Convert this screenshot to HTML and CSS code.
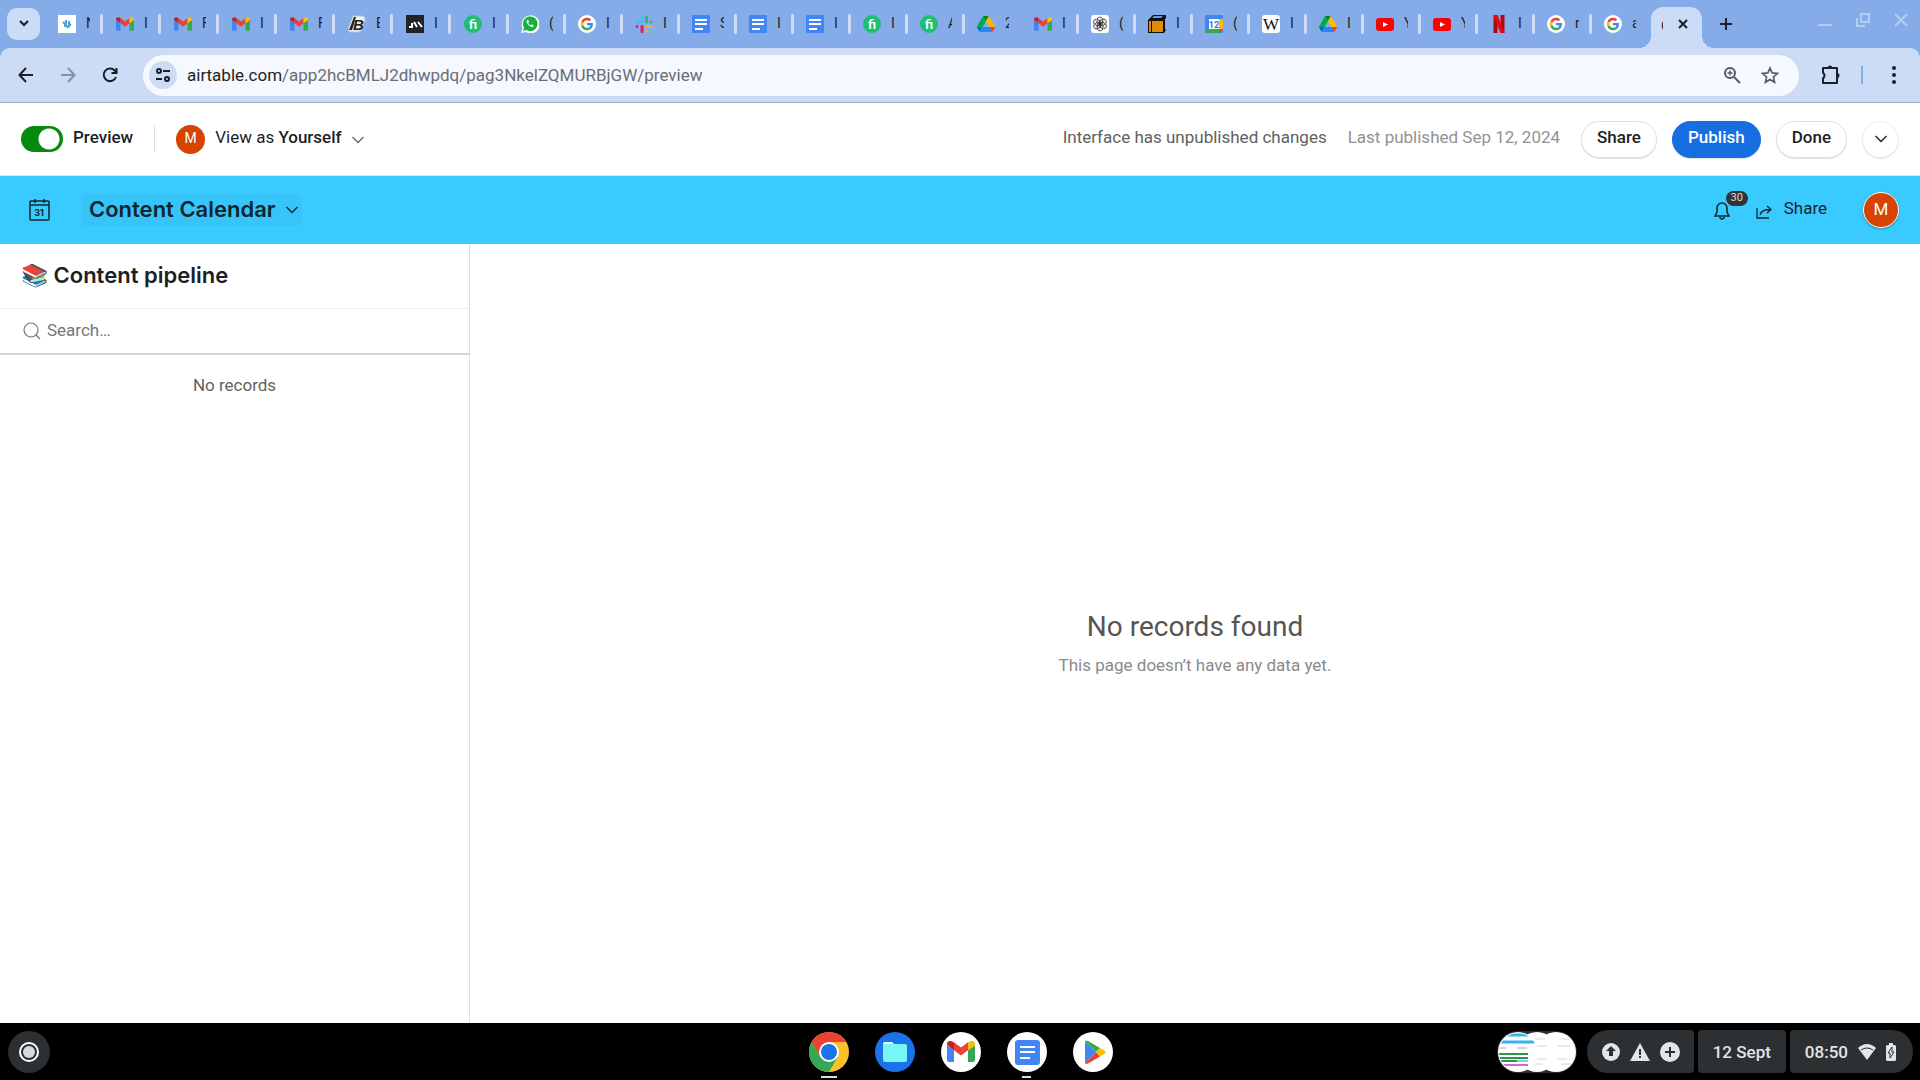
FILE: index.html
```html
<!DOCTYPE html>
<html lang="en">
<head>
  <meta charset="UTF-8">
  <title>Content Calendar</title>
  <link rel="stylesheet" href="styles.css">
</head>
<body>
  <!-- shared icons -->
  <svg class="sprite" width="0" height="0" aria-hidden="true">
    <symbol id="gmail" viewBox="0 0 24 18">
      <path fill="#4285f4" d="M2 18h4V8L0 3.600V16a2 2 0 0 0 2 2z"/>
      <path fill="#34a853" d="M18 18h4a2 2 0 0 0 2-2V3.600L18 8z"/>
      <path fill="#ea4335" d="M6 1l6 4.500L18 1v7l-6 4.500L6 8z"/>
      <path fill="#fbbc04" d="M18 8l6-4.500v-1C24 .4 21.500-.9 19.600.4L18 1.300z"/>
      <path fill="#c5221f" d="M6 8L0 3.500v-1C0 .4 2.500-.9 4.400.4L6 1.300z"/>
    </symbol>
    <symbol id="google" viewBox="0 0 72 72">
      <circle cx="36" cy="36" r="36" fill="#fff"/>
      <g transform="translate(11 11) scale(1.04)">
        <path fill="#ea4335" d="M24 9.5c3.54 0 6.71 1.22 9.21 3.6l6.85-6.85C35.9 2.38 30.47 0 24 0 14.62 0 6.51 5.38 2.56 13.22l7.98 6.19C12.43 13.72 17.74 9.5 24 9.5z"/>
        <path fill="#4285f4" d="M46.98 24.55c0-1.57-.15-3.09-.38-4.55H24v9.02h12.94c-.58 2.96-2.26 5.48-4.78 7.18l7.73 6c4.51-4.18 7.09-10.36 7.09-17.65z"/>
        <path fill="#fbbc05" d="M10.53 28.59c-.48-1.45-.76-2.99-.76-4.59s.27-3.14.76-4.59l-7.98-6.19C.92 16.46 0 20.12 0 24c0 3.88.92 7.54 2.56 10.78l7.97-6.19z"/>
        <path fill="#34a853" d="M24 48c6.48 0 11.93-2.13 15.89-5.81l-7.73-6c-2.15 1.45-4.92 2.3-8.16 2.3-6.26 0-11.57-4.22-13.47-9.91l-7.98 6.19C6.51 42.62 14.62 48 24 48z"/>
      </g>
    </symbol>
    <symbol id="drive" viewBox="0 0 87.3 78">
      <path fill="#0066da" d="m6.6 66.85 3.85 6.65c.8 1.4 1.95 2.5 3.3 3.3l13.75-23.8h-27.5c0 1.55.4 3.1 1.2 4.5z"/>
      <path fill="#00ac47" d="m43.65 25-13.75-23.8c-1.35.8-2.5 1.9-3.3 3.3l-25.4 44a9.06 9.06 0 0 0-1.2 4.5h27.5z"/>
      <path fill="#ea4335" d="m73.55 76.8c1.35-.8 2.5-1.9 3.3-3.3l1.6-2.75 7.65-13.25c.8-1.4 1.2-2.95 1.2-4.5h-27.5l5.85 11.5z"/>
      <path fill="#00832d" d="m43.65 25 13.75-23.8c-1.35-.8-2.9-1.2-4.5-1.2h-18.5c-1.6 0-3.15.45-4.5 1.2z"/>
      <path fill="#2684fc" d="m59.8 53h-32.3l-13.75 23.8c1.35.8 2.9 1.2 4.5 1.2h50.8c1.6 0 3.15-.45 4.5-1.2z"/>
      <path fill="#ffba00" d="m73.4 26.5-12.7-22c-.8-1.4-1.95-2.5-3.3-3.3l-13.75 23.8 16.15 28h27.45c0-1.55-.4-3.1-1.2-4.5z"/>
    </symbol>
    <symbol id="docs" viewBox="0 0 18 18">
      <rect width="18" height="18" rx="1" fill="#4285f4"/>
      <path d="M3 5h12M3 9h12M3 14h8" stroke="#fff" stroke-width="2"/>
    </symbol>
    <symbol id="fiverr" viewBox="0 0 18 18">
      <circle cx="9" cy="9" r="9" fill="#1dbf73"/>
      <text x="9" y="14" text-anchor="middle" font-family="Lato" font-weight="700" font-size="14" fill="#fff">fi</text>
    </symbol>
    <symbol id="youtube" viewBox="0 0 18 18">
      <rect y="3" width="18" height="13" rx="3" fill="#f00"/>
      <path d="M7 7l5 2.500-5 2.500z" fill="#fff"/>
    </symbol>
    <symbol id="chevron" viewBox="0 0 12 8">
      <path d="M.5 1l5.500 5.500L11.500 1" fill="none" stroke="currentColor" stroke-width="1.300"/>
    </symbol>
  </svg>

  <!-- tab strip -->
  <nav class="tabstrip">
    <button class="tab-search" aria-label="Search tabs">
      <svg width="12" height="8" viewBox="0 0 12 8"><path d="M2 1l4 4 4-4" fill="none" stroke="#1b2028" stroke-width="2"/></svg>
    </button>
    <div class="tabs">
      <a class="tab wide" href="#"><svg viewBox="0 0 18 18"><rect width="18" height="18" fill="#fff"/><path d="M5 7l2 2v3M8 5v5l2 3M11 6v5l2-2M6 10l3 1" fill="none" stroke="#4aa7c9" stroke-width="2"/></svg><span>N</span></a>
      <a class="tab wide" href="#"><svg><use href="#gmail"/></svg><span>I</span></a>
      <a class="tab wide" href="#"><svg><use href="#gmail"/></svg><span>F</span></a>
      <a class="tab wide" href="#"><svg><use href="#gmail"/></svg><span>I</span></a>
      <a class="tab wide" href="#"><svg><use href="#gmail"/></svg><span>F</span></a>
      <a class="tab wide" href="#"><svg viewBox="0 0 18 18"><path d="M5 1h10q3 1 2 5l-2 3q1 6-4 8H1L0 14z" fill="#eceef2" stroke="#b9c0cc"/><path d="M6 2L1 15h3L8 2z" fill="#222"/><text x="5" y="15" font-family="Liberation Sans" font-weight="700" font-style="italic" font-size="15" fill="#222">B</text></svg><span>E</span></a>
      <a class="tab wide" href="#"><svg viewBox="0 0 18 18"><rect width="18" height="18" fill="#222326"/><path d="M3 12h3V8M8 7l3 5M12 7l4 5" fill="none" stroke="#fff" stroke-width="2"/></svg><span>I</span></a>
      <a class="tab" href="#"><svg><use href="#fiverr"/></svg><span>I</span></a>
      <a class="tab" href="#"><svg viewBox="0 0 18 18"><path d="M0 18l1.500-5A9 9 0 1 1 5 17z" fill="#fff"/><path d="M2 16l1-3.500a7.300 7.300 0 1 1 2.500 2.500z" fill="#12b33a"/><path d="M6 5c-1 1-.5 3 1.500 5s4 2.700 5 1.500v-1.300l-2-.9-1 1c-1-.4-2-1.400-2.300-2.400l.8-.8L7.300 5z" fill="#fff"/></svg><span>(</span></a>
      <a class="tab" href="#"><svg><use href="#google"/></svg><span>I</span></a>
      <a class="tab" href="#"><svg viewBox="0 0 18 18" fill="none" stroke-width="3" stroke-linecap="round"><path d="M2 7h5M7 2v0" stroke="#36c5f0"/><path d="M11.500 2v5M16 7v0" stroke="#2eb67d"/><path d="M11.500 11.500h5M11.500 16v0" stroke="#ecb22e"/><path d="M7 11.500v5M2 11.500v0" stroke="#e01e5a"/></svg><span>I</span></a>
      <a class="tab" href="#"><svg><use href="#docs"/></svg><span>S</span></a>
      <a class="tab" href="#"><svg><use href="#docs"/></svg><span>I</span></a>
      <a class="tab" href="#"><svg><use href="#docs"/></svg><span>I</span></a>
      <a class="tab" href="#"><svg><use href="#fiverr"/></svg><span>I</span></a>
      <a class="tab" href="#"><svg><use href="#fiverr"/></svg><span>A</span></a>
      <a class="tab no-line" href="#"><svg><use href="#drive"/></svg><span>2</span></a>
      <a class="tab" href="#"><svg><use href="#gmail"/></svg><span>I</span></a>
      <a class="tab" href="#"><svg viewBox="0 0 18 18"><rect width="18" height="18" rx="3" fill="#fff"/><g fill="none" stroke="#222" stroke-width=".8"><path id="petal" d="M6 8V5a3 3 0 0 1 5.500-1.500M6 8l5 3 3.200-1.800"/><use href="#petal" transform="rotate(60 9 9)"/><use href="#petal" transform="rotate(120 9 9)"/><use href="#petal" transform="rotate(180 9 9)"/><use href="#petal" transform="rotate(240 9 9)"/><use href="#petal" transform="rotate(300 9 9)"/></g></svg><span>(</span></a>
      <a class="tab" href="#"><svg viewBox="0 0 18 18"><path d="M0 5l5-5h13v3l-1 1v10l1 1-2 3H0z" fill="#111"/><path d="M4 3l2-2h9l-2 2z" fill="#6d9bc8"/><path d="M1 6h2v11H1zM4 6h11v11H4z" fill="#e08b08"/></svg><span>I</span></a>
      <a class="tab" href="#"><svg viewBox="0 0 18 18"><rect width="18" height="18" rx="1" fill="#4285f4"/><path d="M14 4h4v10h-4z" fill="#fbbc04"/><path d="M0 14h14v4H1a1 1 0 0 1-1-1z" fill="#34a853"/><path d="M14 14h4l-4 4z" fill="#ea4335"/><path d="M4 4h10v10H4z" fill="#fff"/><text x="9" y="13" text-anchor="middle" font-family="Roboto" font-weight="700" font-size="9" fill="#3f72cf">12</text></svg><span>(</span></a>
      <a class="tab" href="#"><svg viewBox="0 0 18 18"><rect width="18" height="18" rx="3" fill="#fff"/><text x="9" y="15" text-anchor="middle" font-family="Liberation Serif" font-size="17" fill="#111">W</text></svg><span>I</span></a>
      <a class="tab" href="#"><svg><use href="#drive"/></svg><span>I</span></a>
      <a class="tab" href="#"><svg><use href="#youtube"/></svg><span>Y</span></a>
      <a class="tab" href="#"><svg><use href="#youtube"/></svg><span>Y</span></a>
      <a class="tab" href="#"><svg viewBox="0 0 18 18"><path d="M5.500 0v18M12.500 0v18" stroke="#b1060f" stroke-width="4"/><path d="M5.500 0l7 18" stroke="#e50914" stroke-width="4"/></svg><span>I</span></a>
      <a class="tab" href="#"><svg><use href="#google"/></svg><span>r</span></a>
      <a class="tab no-line" href="#"><svg><use href="#google"/></svg><span>a</span></a>
    </div>
    <div class="tab-active">
      <span>C</span>
      <button aria-label="Close tab"><svg width="10" height="10" viewBox="0 0 10 10"><path d="M1 1l8 8M9 1L1 9" stroke="#1b2028" stroke-width="2"/></svg></button>
    </div>
    <button class="new-tab" aria-label="New tab"><svg width="12" height="12" viewBox="0 0 12 12"><path d="M6 0v12M0 6h12" stroke="#1b2028" stroke-width="2"/></svg></button>
    <div class="window-buttons">
      <button aria-label="Minimise"><svg width="14" height="14" viewBox="0 0 14 14"><path d="M0 12h14" stroke="#b4cdf5" stroke-width="2"/></svg></button>
      <button aria-label="Restore"><svg width="14" height="14" viewBox="0 0 14 14" fill="none" stroke="#b4cdf5" stroke-width="2"><path d="M5 1h8v8H5zM1 5v8h8"/></svg></button>
      <button aria-label="Close"><svg width="14" height="14" viewBox="0 0 14 14"><path d="M1 1l12 12M13 1L1 13" stroke="#b4cdf5" stroke-width="2"/></svg></button>
    </div>
  </nav>

  <!-- address bar -->
  <div class="toolbar">
    <button aria-label="Back"><svg width="16" height="16" viewBox="0 0 16 16" fill="none" stroke="#1b2028" stroke-width="2"><path d="M15 8H2M8 1L1.500 8 8 15"/></svg></button>
    <button aria-label="Forward"><svg width="16" height="16" viewBox="0 0 16 16" fill="none" stroke="#8791a8" stroke-width="2"><path d="M1 8h13M8 1l6.500 7L8 15"/></svg></button>
    <button aria-label="Reload"><svg width="16" height="16" viewBox="0 0 16 16" fill="none" stroke="#1b2028" stroke-width="2"><path d="M14 10a6.300 6.300 0 1 1-1.300-6.500L14 5M14.500 1v5H9.500"/></svg></button>
    <div class="omnibox">
      <button class="site-info" aria-label="Site information"><svg width="16" height="16" viewBox="0 0 16 16" fill="none" stroke="#1b2028" stroke-width="2"><circle cx="4" cy="4" r="2"/><path d="M8 4h7M1 12h6"/><circle cx="12" cy="12" r="2"/></svg></button>
      <a class="url" href="#">airtable.com<span>/app2hcBMLJ2dhwpdq/pag3NkelZQMURBjGW/preview</span></a>
      <button aria-label="Zoom"><svg width="18" height="18" viewBox="0 0 18 18" fill="none" stroke="#555a61" stroke-width="2"><circle cx="7" cy="7" r="5"/><path d="M11 11l6 6"/><path d="M4.500 7h5M7 4.500v5" stroke-width="1.500"/></svg></button>
      <button aria-label="Bookmark"><svg width="18" height="18" viewBox="0 0 18 18" fill="none" stroke="#555a61" stroke-width="1.600"><path d="M9 2l2.100 4.900 5.400.5-4.100 3.600 1.200 5.300L9 13.500l-4.600 2.800L5.600 11 1.500 7.400l5.400-.5z"/></svg></button>
    </div>
    <button aria-label="Extensions"><svg width="20" height="20" viewBox="0 0 20 20"><path d="M2 3h14v15H2v-4.500q3-3 0-6z" fill="none" stroke="#1b2028" stroke-width="2" stroke-linejoin="round"/><path d="M6.500 3a2.500 2.500 0 0 1 5 0zM16 8a2.500 2.500 0 0 1 0 5z" fill="#1b2028"/></svg></button>
    <span class="toolbar-line"></span>
    <button aria-label="Menu"><svg width="4" height="18" viewBox="0 0 4 18" fill="#1b2028"><circle cx="2" cy="2" r="2"/><circle cx="2" cy="9" r="2"/><circle cx="2" cy="16" r="2"/></svg></button>
  </div>

  <!-- preview bar -->
  <header class="preview-bar">
    <label class="toggle"><input type="checkbox" checked><span class="lift">Preview</span></label>
    <span class="divider"></span>
    <button class="view-as">
      <span class="avatar">M</span>
      <span class="lift">View as <b>Yourself</b></span>
      <svg class="chevron"><use href="#chevron"/></svg>
    </button>
    <span class="status lift">Interface has unpublished changes</span>
    <span class="published lift">Last published Sep 12, 2024</span>
    <div class="actions">
      <button class="pill">Share</button>
      <button class="pill primary">Publish</button>
      <button class="pill">Done</button>
      <button class="more" aria-label="More"><svg class="chevron"><use href="#chevron"/></svg></button>
    </div>
  </header>

  <!-- app header -->
  <header class="app-bar">
    <svg class="calendar" width="22" height="22" viewBox="0 0 22 22" fill="none" stroke="#12262e" stroke-width="1.500"><rect x="2" y="2" width="19" height="19" rx="1"/><path d="M2 6h19M7 0v4M16 0v4"/><text x="11" y="17" text-anchor="middle" font-family="Inter" font-weight="700" font-size="9" fill="#12262e" stroke="none">31</text></svg>
    <button class="app-title">Content Calendar <svg class="chevron"><use href="#chevron"/></svg></button>
    <button class="bell" aria-label="Notifications">
      <svg width="18" height="20" viewBox="0 0 18 20" fill="none" stroke="#12262e" stroke-width="1.500"><path d="M2 15l2-4V7a5 5 0 0 1 10 0v4l2 4zM7 16a2 2 0 0 0 4 0"/></svg>
      <span class="badge">30</span>
    </button>
    <button class="share">
      <svg width="16" height="14" viewBox="0 0 16 14" fill="none" stroke="#12262e" stroke-width="1.300"><path d="M1 3v10h12M4 10c1-4 4-5.500 10-5.500M11 1l4 3.500L11 8"/></svg>
      <span class="lift">Share</span>
    </button>
    <span class="avatar ringed">M</span>
  </header>

  <main class="content">
    <aside class="sidebar">
      <h1><span class="books">📚</span> Content pipeline</h1>
      <label class="search">
        <svg width="18" height="18" viewBox="0 0 18 18" fill="none" stroke="#777" stroke-width="1.200"><circle cx="8" cy="8" r="7"/><path d="M13 13l4 4"/></svg>
        <input type="text" placeholder="Search…" aria-label="Search">
      </label>
      <p>No records</p>
    </aside>
    <section class="empty">
      <h2>No records found</h2>
      <p>This page doesn’t have any data yet.</p>
    </section>
  </main>

  <!-- shelf -->
  <footer class="shelf">
    <button class="launcher" aria-label="Launcher"><span></span></button>
    <div class="apps">
      <button class="app running" aria-label="Chrome"><svg viewBox="0 0 40 40"><circle cx="20" cy="20" r="20" fill="#fbc02d"/><path d="M2.700 10A20 20 0 0 1 37.300 10H20L11.300 25z" fill="#ea4335"/><path d="M2.700 10A20 20 0 0 0 20 40l8.700-15L11.300 25z" fill="#34a853"/><circle cx="20" cy="20" r="10" fill="#fff"/><circle cx="20" cy="20" r="8" fill="#1a73e8"/></svg></button>
      <button class="app" aria-label="Files"><svg viewBox="0 0 40 40"><circle cx="20" cy="20" r="20" fill="#1a73e8"/><path d="M8 12q0-2 2-2h7l3 3H8z" fill="#fff"/><path d="M8 12h22q2 0 2 2v14q0 2-2 2H10q-2 0-2-2z" fill="#78f5f5"/></svg></button>
      <button class="app" aria-label="Gmail"><svg viewBox="0 0 40 40"><circle cx="20" cy="20" r="20" fill="#fff"/><use href="#gmail" x="6" y="9" width="28" height="21"/></svg></button>
      <button class="app running small" aria-label="Docs"><svg viewBox="0 0 40 40"><circle cx="20" cy="20" r="20" fill="#fff"/><rect x="8" y="8" width="25" height="25" rx="3" fill="#4285f4"/><path d="M13 15h15M13 20h15M13 26h10" stroke="#fff" stroke-width="2"/></svg></button>
      <button class="app" aria-label="Play Store"><svg viewBox="0 0 40 40"><circle cx="20" cy="20" r="20" fill="#fff"/><path d="M12 9v22l11-11z" fill="#4285f4"/><path d="M12 9q1-1 3 0l12 7-4 4z" fill="#34a853"/><path d="M12 31q1 1.500 3 .5l12-7-4-4.500z" fill="#ea4335"/><path d="M27 16l5 3q1.500 1 0 2.500l-5 3-4-4.500z" fill="#fbbc04"/></svg></button>
    </div>
    <div class="tray">
      <button class="holding" aria-label="Recent captures">
        <svg width="80" height="42" viewBox="0 0 80 42">
          <clipPath id="shot"><circle cx="21" cy="21" r="19"/></clipPath>
          <rect width="80" height="42" rx="21" fill="#2c3032"/>
          <circle cx="59" cy="21" r="20" fill="#fff"/>
          <path d="M64 8h9M61 15h12M60 28h10M64 33h10" stroke="#d5d5d8"/>
          <circle cx="40" cy="21" r="20" fill="#fff"/>
          <path d="M38 8h10M34 15h16M36 28h13M34 33h12" stroke="#d5d5d8"/>
          <circle cx="21" cy="21" r="20" fill="#fff"/>
          <g clip-path="url(#shot)" fill="none" stroke-width="2">
            <path d="M0 4h31M0 11h38" stroke="#35b4ec" stroke-width="3"/>
            <path d="M0 17h9M20 17h10" stroke="#aaa" stroke-width="1"/>
            <path d="M0 23h31M0 27h31M0 30h20" stroke="#2f9443"/>
            <path d="M20 30h11" stroke="#7ad6e8"/>
            <path d="M0 34h31" stroke="#dd63cb"/>
          </g>
        </svg>
      </button>
      <button class="chip first" aria-label="Notifications">
        <svg width="18" height="18" viewBox="0 0 18 18"><circle cx="9" cy="9" r="9" fill="#e3e5e6"/><path d="M9 3l5 5h-3v5H7V8H4z" fill="#2c3032"/></svg>
        <svg width="20" height="18" viewBox="0 0 20 18"><path d="M10 0l10 18H0z" fill="#e3e5e6"/><path d="M10 6v6M10 13v2" stroke="#2c3032" stroke-width="2"/></svg>
        <svg width="20" height="20" viewBox="0 0 20 20"><circle cx="10" cy="10" r="10" fill="#e3e5e6"/><path d="M10 5v10M5 10h10" stroke="#2c3032" stroke-width="2"/></svg>
      </button>
      <button class="chip">12 Sept</button>
      <button class="chip last">
        <span>08:50</span>
        <svg width="18" height="16" viewBox="0 0 18 16"><path d="M0 4q9-8 18 0L9 16z" fill="#e3e5e6"/><path d="M3 6q6-4 12 0" stroke="#2c3032" fill="none"/></svg>
        <svg width="10" height="18" viewBox="0 0 10 18"><path d="M3 0h4v2h2l1 1v14l-1 1H1l-1-1V3l1-1h2z" fill="#e3e5e6"/><path d="M6 4l-4 6h2v5l4-6H6z" fill="none" stroke="#2c3032"/></svg>
      </button>
    </div>
  </footer>
</body>
</html>
```
FILE: styles.css
```css
* {
  box-sizing: border-box;
}
body {
  margin: 0;
  min-height: 100vh;
  display: flex;
  flex-direction: column;
  font-family: Roboto, sans-serif;
  font-size: 17px;
  line-height: 24px;
  color: #1d1f25;
  background: #fff;
}
button {
  display: flex;
  align-items: center;
  justify-content: center;
  padding: 0;
  border: none;
  background: none;
  font: inherit;
  color: inherit;
  cursor: pointer;
}
a {
  color: inherit;
  text-decoration: none;
}
svg {
  flex: none;
}
h1, h2, p {
  margin: 0;
}
.sprite {
  position: absolute;
}
.lift {
  padding-bottom: 4px;
}
.chevron {
  width: 12px;
  height: 8px;
}

/* tab strip */
.tabstrip {
  display: flex;
  height: 60px;
  margin-bottom: -12px;
  padding: 0 0 12px 7px;
  background: #85ace8;
}
.tab-search {
  width: 33px;
  height: 32px;
  margin: 8px 18px 0 0;
  border-radius: 10px;
  background: #cddcf6;
}
.tabs {
  display: flex;
}
.tab {
  display: flex;
  align-items: center;
  width: 57px;
  font-size: 14px;
}
.tab.wide {
  width: 58px;
}
.tab svg {
  width: 18px;
  height: 18px;
  margin-right: 10px;
}
.tab span {
  width: 4px;
  height: 20px;
  line-height: 18px;
  overflow: hidden;
}
.tab::after {
  content: "";
  width: 3px;
  height: 20px;
  margin-left: 10px;
  border-radius: 2px;
  background: #cddcf6;
}
.tab.no-line::after {
  background: none;
}
.tab-active {
  position: relative;
  display: flex;
  align-items: center;
  width: 51px;
  height: 41px;
  margin: 7px 0 0 -10px;
  padding-left: 10px;
  gap: 15px;
  border-radius: 12px 12px 0 0;
  background: #cddcf6;
  font-size: 14px;
}
.tab-active span {
  width: 2px;
  height: 28px;
  line-height: 24px;
  overflow: hidden;
}
.tab-active button {
  padding-bottom: 8px;
}
.tab-active::before, .tab-active::after {
  content: "";
  position: absolute;
  bottom: 0;
  width: 12px;
  height: 12px;
}
.tab-active::before {
  left: -12px;
  background: radial-gradient(circle at 0 0, transparent 12px, #cddcf6 12px);
}
.tab-active::after {
  right: -12px;
  background: radial-gradient(circle at 100% 0, transparent 12px, #cddcf6 12px);
}
.new-tab {
  width: 48px;
}
.window-buttons {
  display: flex;
  align-items: flex-start;
  gap: 24px;
  margin-left: auto;
  padding: 13px 12px 0 0;
}

/* toolbar */
.toolbar {
  position: relative;
  display: flex;
  align-items: center;
  height: 55px;
  padding: 0 24px 0 18px;
  border-bottom: 1px solid #9aaccf;
  border-radius: 10px 10px 0 0;
  background: #cddcf6;
}
.toolbar > button {
  margin-right: 26px;
}
.omnibox {
  display: flex;
  flex: 1;
  align-items: center;
  height: 41px;
  margin: 0 22px 0 -1px;
  padding: 0 20px 0 6px;
  gap: 20px;
  border-radius: 21px;
  background: #f5f8fe;
}
.site-info {
  width: 28px;
  height: 28px;
  margin-right: -10px;
  border-radius: 50%;
  background: #cddcf6;
}
.url {
  flex: 1;
}
.url span {
  color: #696d74;
}
.toolbar-line {
  width: 2px;
  height: 18px;
  margin: 0 29px 0 -6px;
  background: #85ace8;
}
.toolbar > button:last-child {
  margin-right: 0;
}

/* preview bar */
.preview-bar {
  display: flex;
  align-items: center;
  height: 73px;
  padding: 0 21px;
  border-bottom: 1px solid #d9e4ea;
}
.toggle {
  display: flex;
  align-items: center;
  gap: 10px;
  font-weight: 500;
}
.toggle input {
  appearance: none;
  width: 42px;
  height: 26px;
  margin: 0;
  border-radius: 13px;
  background: radial-gradient(circle at 28px 13px, #fff 10px, #048a0e 11px);
}
.divider {
  width: 1px;
  height: 26px;
  margin: 0 21px;
  background: #ddd;
}
.view-as {
  gap: 10px;
}
.view-as b {
  font-weight: 500;
}
.view-as .chevron {
  margin-top: 2px;
  color: #666;
}
.avatar {
  width: 29px;
  height: 29px;
  border-radius: 50%;
  background: #d54401;
  color: #fff;
  font-size: 14px;
  line-height: 27px;
  text-align: center;
}
.avatar.ringed {
  width: 36px;
  height: 36px;
  border: 1px solid #fff;
  font-size: 17px;
  line-height: 32px;
  box-shadow: 0 1px 2px rgba(0, 0, 0, .3);
}
.status {
  margin-left: auto;
  color: #616161;
}
.published {
  margin: 0 21px;
  color: #929292;
}
.actions {
  display: flex;
  gap: 15px;
}
.pill, .more {
  height: 37px;
  padding: 0 15px 4px;
  border: 1px solid #e0e0e0;
  border-radius: 19px;
  background: #fff;
  font-weight: 500;
  box-shadow: 0 1px 1px rgba(0, 0, 0, .12);
}
.primary {
  border-color: #166ee1;
  background: #166ee1;
  color: #fff;
}
.more {
  width: 37px;
  padding: 0;
  border-color: #eee;
}

/* app bar */
.app-bar {
  display: flex;
  align-items: center;
  height: 68px;
  padding: 0 21px 0 28px;
  background: #39caff;
  color: #12262e;
}
.app-title {
  gap: 10px;
  height: 32px;
  margin-left: 31px;
  padding: 0 4px 2px 8px;
  border-radius: 6px;
  background: #37c4f8;
  font: 600 22px/30px Inter, sans-serif;
}
.app-title .chevron {
  margin-top: 2px;
}
.bell {
  position: relative;
  margin-left: auto;
  padding-top: 2px;
}
.badge {
  position: absolute;
  left: 13px;
  top: -8px;
  width: 22px;
  height: 15px;
  border-radius: 8px;
  background: #333;
  color: #ddd;
  font-size: 11px;
  line-height: 14px;
}
.share {
  gap: 12px;
  margin: 0 36px 0 25px;
}
.share svg {
  margin-top: 3px;
}

/* content */
.content {
  display: flex;
  flex: 1;
}
.sidebar {
  width: 470px;
  border-right: 1px solid #ddd;
}
.sidebar h1 {
  height: 65px;
  padding: 16px 21px;
  border-bottom: 1px solid #eee;
  font: 600 22px/30px Inter, sans-serif;
}
.search {
  display: flex;
  align-items: center;
  gap: 6px;
  height: 46px;
  padding: 0 23px;
  border-bottom: 2px solid #d3d6d6;
}
.search input {
  flex: 1;
  padding: 0 0 3px;
  border: none;
  outline: none;
  font: inherit;
}
.search input::placeholder {
  color: #757575;
}
.sidebar p {
  padding-top: 18px;
  text-align: center;
  color: #616161;
}
.empty {
  display: flex;
  flex: 1;
  flex-direction: column;
  align-items: center;
  justify-content: center;
  gap: 8px;
  padding-top: 18px;
  color: #8a8a8a;
}
.empty h2 {
  font: 400 28px/36px Roboto, sans-serif;
  color: #555;
}

/* shelf */
.shelf {
  display: grid;
  grid-template-columns: 1fr auto 1fr;
  align-items: center;
  height: 57px;
  padding: 0 7px 0 8px;
  background: #000;
}
.launcher {
  width: 42px;
  height: 42px;
  border-radius: 50%;
  background: #2c3032;
}
.launcher span {
  width: 20px;
  height: 20px;
  border: 2px solid #fff;
  border-radius: 50%;
  background: #d8dadb;
  background-clip: content-box;
  padding: 2px;
}
.apps {
  display: flex;
  gap: 26px;
}
.app {
  position: relative;
  width: 40px;
  height: 40px;
}
.app svg {
  width: 40px;
  height: 40px;
}
.app.running::after {
  content: "";
  position: absolute;
  bottom: -6px;
  width: 16px;
  height: 2px;
  background: #ddd;
}
.app.small::after {
  width: 9px;
}
.tray {
  display: flex;
  align-items: center;
  justify-content: flex-end;
  gap: 4px;
}
.holding {
  margin-right: 6px;
}
.chip {
  height: 43px;
  padding: 0 15px;
  gap: 10px;
  border-radius: 4px;
  background: #2c3032;
  color: #e3e5e6;
  font-weight: 500;
}
.chip.first {
  border-radius: 21px 4px 4px 21px;
  padding-right: 14px;
}
.chip.last {
  border-radius: 4px 21px 21px 4px;
  padding-right: 17px;
}
```
